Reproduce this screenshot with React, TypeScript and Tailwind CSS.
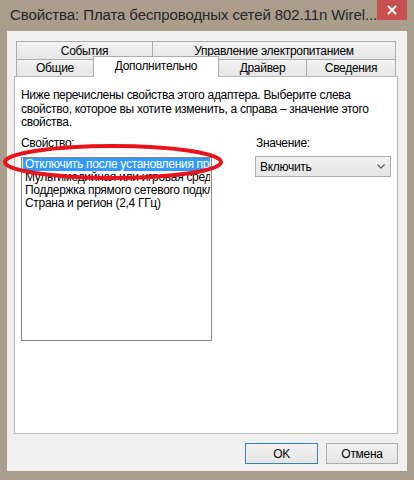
const items = [
  "Отключить после установления проводного соединения",
  "Мультимедийная или игровая среда",
  "Поддержка прямого сетевого подключения",
  "Страна и регион (2,4 ГГц)",
];

function Tab({ label, className }: { label: string; className: string }) {
  return (
    <div
      className={
        "flex items-center justify-center border-[#acacac] bg-gradient-to-b from-[#f2f2f2] to-[#e6e6e6] whitespace-nowrap " +
        className
      }
    >
      {label}
    </div>
  );
}

export default function App() {
  return (
    <div className="relative w-[414px] h-[480px] bg-[#ab9d8c] font-['Liberation_Sans',Arial,sans-serif] text-[12px] tracking-[-0.3px] text-black flex flex-col">
      {/* title bar */}
      <div className="h-[31px] flex items-start shrink-0">
        <div className="flex-1 pl-[10px] pt-[5px] text-[15px] tracking-[-0.1px] leading-[20px] text-[#262626] whitespace-nowrap">
          Свойства: Плата беспроводных сетей 802.11n Wirel...
        </div>
        <div className="w-[31px] h-[20px] mr-[7px] bg-[#c75050] flex items-center justify-center">
          <svg width="10" height="10" viewBox="0 0 10 10">
            <path d="M1 1L9 9M9 1L1 9" stroke="white" strokeWidth="2" />
          </svg>
        </div>
      </div>

      {/* client area */}
      <div className="mx-[7px] h-[440px] bg-[#f0f0f0] flex flex-col pt-[10px]">
        {/* tabs */}
        <div className="ml-[9px] w-[380px] h-[18px] flex">
          <Tab label="События" className="w-[136px] border-t border-l" />
          <Tab label="Управление электропитанием" className="w-[244px] border-t border-l border-r" />
        </div>
        <div className="ml-[9px] w-[380px] h-[17px] flex items-start">
          <Tab label="Общие" className="w-[77px] h-[17px] border-t border-l" />
          <div className="relative z-10 -mt-[3px] w-[126px] h-[21px] bg-white border border-b-0 border-[#acacac] flex items-center justify-center pb-[2px]">
            Дополнительно
          </div>
          <Tab label="Драйвер" className="w-[87px] h-[17px] border-t" />
          <Tab label="Сведения" className="w-[90px] h-[17px] border-t border-l border-r" />
        </div>

        {/* panel */}
        <div className="ml-[7px] w-[384px] h-[358px] bg-white border border-[#b9b9b9] pt-[12px] px-[6px]">
          <p className="leading-[13.5px] whitespace-nowrap">
            Ниже перечислены свойства этого адаптера. Выберите слева
            <br />
            свойство, которое вы хотите изменить, а справа – значение этого
            <br />
            свойства.
          </p>
          <div className="mt-[7px] flex">
            <div className="w-[191px]">
              <div className="leading-[13.5px]">Свойство:</div>
              <div className="mt-[7px] h-[184px] border border-[#828790] bg-white px-[1px]">
                {items.map((it, i) => (
                  <div
                    key={it}
                    className={
                      "h-[13px] leading-[13px] px-[2px] whitespace-nowrap overflow-hidden " +
                      (i === 0 ? "bg-[#3399ff] text-white" : "")
                    }
                  >
                    {it}
                  </div>
                ))}
              </div>
            </div>
            <div className="ml-[43px] w-[137px]">
              <div className="pl-[1px] leading-[13.5px]">Значение:</div>
              <div className="mt-[6px] h-[21px] border border-[#acacac] bg-gradient-to-b from-[#f2f2f2] to-[#e5e5e5] flex items-center pl-[4px] pr-[5px]">
                <span className="flex-1">Включить</span>
                <svg width="8" height="5" viewBox="0 0 8 5">
                  <path d="M0.5 0.5L4 4L7.5 0.5" fill="none" stroke="#606060" strokeWidth="1.3" />
                </svg>
              </div>
            </div>
          </div>
        </div>

        {/* buttons */}
        <div className="mt-[9px] pr-[9px] flex justify-end gap-[8px]">
          <button className="w-[73px] h-[21px] border border-[#3c7fb1] bg-gradient-to-b from-[#f2f2f2] to-[#e5e5e5]">
            OK
          </button>
          <button className="w-[72px] h-[21px] border border-[#acacac] bg-gradient-to-b from-[#f2f2f2] to-[#e5e5e5]">
            Отмена
          </button>
        </div>
      </div>

      {/* red annotation ellipse */}
      <svg className="absolute left-0 top-0 pointer-events-none z-20" width="414" height="480">
        <ellipse cx="113" cy="162" rx="108" ry="16" fill="none" stroke="#e8141c" strokeWidth="4" />
      </svg>
    </div>
  );
}
